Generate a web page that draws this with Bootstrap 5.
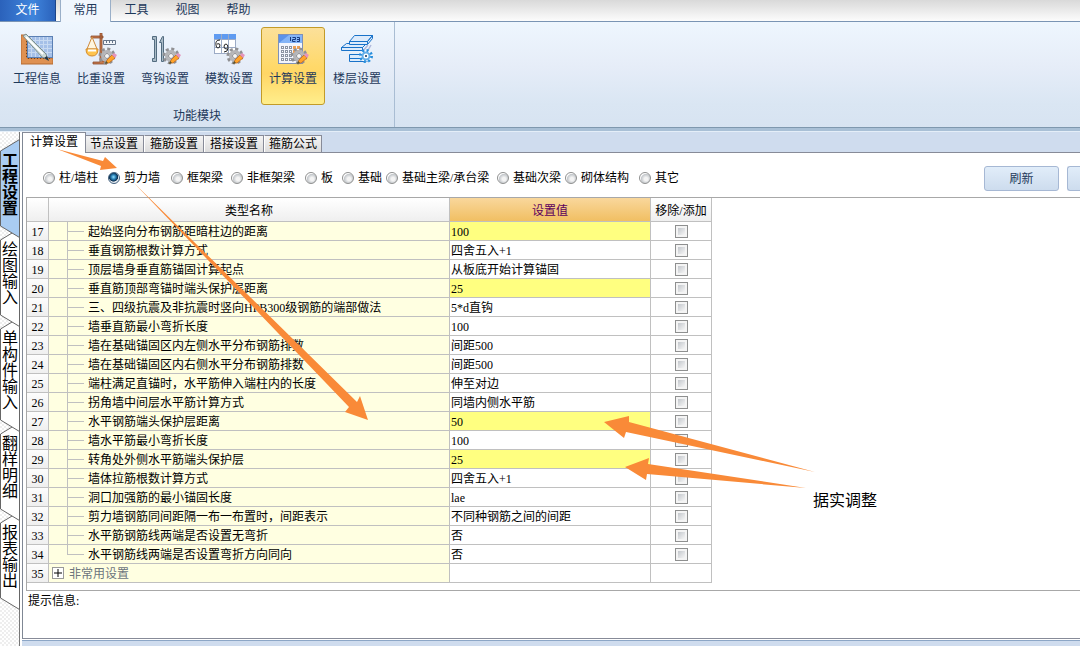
<!DOCTYPE html>
<html lang="zh-CN">
<head>
<meta charset="utf-8">
<meta name="viewport" content="width=device-width, initial-scale=1">
<title>工程设置</title>
<link href="https://cdn.jsdelivr.net/npm/bootstrap@5.3.0/dist/css/bootstrap.min.css" rel="stylesheet">
<style>
  body { font: 12px/18px "Liberation Serif", "Noto Sans CJK SC", sans-serif; color: #000; background: #fff; }
  button { font: inherit; border: 0; padding: 0; background: none; }
  .ribbon-font { font-family: "Noto Sans CJK SC", sans-serif; color: #1e395b; }
  .menu-tabs { height: 22px; background: linear-gradient(#d9d9d9, #fcfcfc); border-bottom: 1px solid #7a94b4; }
  .menu-tabs button { width: 51px; height: 20px; padding-bottom: 2px; color: #1e395b; }
  .menu-tabs .file-tab { width: 56px; height: 21px; padding-bottom: 4px; color: #fff; background: linear-gradient(90deg, #2b62bb, #3f84dc 60%, #2b62bb); border-right: 1px solid #1c4488; margin-right: 4px; }
  .menu-tabs .current { height: 22px; padding-bottom: 4px; background: #f0f6fd; border: 1px solid #9aafc8; border-width: 0 1px; }
  .ribbon { height: 110px; background: linear-gradient(#eef6fe, #e6edf8 40%, #dae6f3 75%, #d7e3f1); border-bottom: 1px solid #e4eef8; box-shadow: inset 0 -3px #a9c0d6, inset 0 -4px #7f98ae; padding-bottom: 4px; }
  .ribbon-group { border-right: 1px solid #a9bdd3; padding: 5px 5px 0; }
  .tool { display: flex; flex-direction: column; align-items: center; gap: 4px; width: 64px; height: 78px; color: #1e395b; border: 1px solid transparent; border-radius: 3px; padding-top: 5px; white-space: nowrap; }
  .tool svg { width: 32px; height: 32px; flex: none; }
  .tool.active { border-color: #c29b29; background: linear-gradient(#fbe09a, #ffd96a 50%, #ffd665 60%, #ffee8c); }
  .group-name { padding-top: 1px; text-align: center; }
  .side { width: 20px; border-right: 1px solid #777; padding-top: 7px; background: repeating-conic-gradient(#eee 0 25%, #fff 0 50%) 0 0/4px 4px; }
  .side-tab { display: grid; width: 20px; margin-bottom: -10px; position: relative; font-size: 16px; line-height: 16px; font-family: "Noto Sans CJK SC", sans-serif; }
  .side-tab svg, .side-tab span { grid-area: 1/1; width: 100%; }
  .side-tab svg { height: 100%; fill: #fff; stroke: #666; }
  .side-tab span { padding: 12px 2px 23px; z-index: 1; width: 20px; overflow-wrap: anywhere; }
  .side-tab.active { font-weight: 700; z-index: 5; }
  .side-tab.active svg { fill: #a9ccf2; }
  .side-tab:nth-child(2) { z-index: 4; } .side-tab:nth-child(3) { z-index: 3; } .side-tab:nth-child(4) { z-index: 2; }
  .page-area { border-left: 1px solid #7f8794; margin-left: 2px; }
  .sub-tabs { height: 21px; background: #cfdcee; border-bottom: 1px solid #878b98; }
  .sub-tabs button { width: 60px; height: 17px; line-height: 16px; background: linear-gradient(#f4f4f4, #dcdcdc); border: 1px solid #878b98; border-bottom: 0; border-left-color: #fff; white-space: nowrap; }
  .sub-tabs .current { width: 63px; height: 21px; background: #fff; border-left: 0; margin: 0 -2px -1px 0; padding-bottom: 2px; z-index: 1; }
  .sub-tabs button:last-child { width: 58px; }
  .filter-bar { height: 44px; padding: 6px 0 0 20px; }
  .kinds { display: grid; grid-template-columns: 65px 63px 60px 74px 37px 44px 111px 68px 74px 60px; }
  .kinds label { display: flex; align-items: center; gap: 4px; white-space: nowrap; }
  .kinds input { appearance: none; flex: none; width: 12px; height: 12px; margin: 0; border: 1px solid #8e8f8f; border-radius: 50%; background: radial-gradient(circle at 60% 60%, #f4f4f4 20%, #c4c8cc 55%, #fff 65%); }
  .kinds input:checked { border-color: #42607e; background: radial-gradient(circle at 45% 40%, #8fe0ff 0, #2478ad 30%, #0b2d4c 52%, #e4eaf0 60%); }
  .soft-btn { flex: none; width: 75px; height: 25px; border: 1px solid #a6b8d4; border-radius: 3px; background: linear-gradient(#e1edf9, #cddcee); color: #1e395b; }
  .more-btn { width: 13px; border-right: 0; border-radius: 3px 0 0 3px; }
  .grid-box { border: 1px solid #a8a8a8; border-right: 0; margin-left: 3px; padding-bottom: 7px; }
  .sheet { table-layout: fixed; width: 685px; border-collapse: separate; border-spacing: 0; }
  .sheet th, .sheet td { border: solid #c0c0c0; border-width: 0 1px 1px 0; height: 19px; line-height: 16px; padding: 2px 1px 0; white-space: nowrap; font-weight: 400; overflow: hidden; }
  .sheet thead th { height: 24px; text-align: center; background: linear-gradient(#fff, #efefef); }
  .sheet thead .picked { background: linear-gradient(#f9d79c, #f1bf62); color: #5c005c; }
  .sheet tbody th { text-align: center; background: linear-gradient(#fdfdfd, #efefef); }
  .sheet .item { background: #ffffe1; padding-top: 0; line-height: 18px; }
  .item-name { padding-top: 2px; line-height: 16px; }
  .branch { width: 17px; height: 18px; margin: 0 4px 0 17px; border-left: 1px solid #c0c0c0; flex: none; background: linear-gradient(#c0c0c0, #c0c0c0) 0 9px/16px 1px no-repeat; }
  .branch.end { border-image: linear-gradient(#c0c0c0 55%, transparent 55%) 1; }
  .sheet .changed { background: #ffff80; }
  .sheet td.pick { padding: 0; }
  .sheet input { appearance: none; display: block; width: 13px; height: 13px; margin: 0 auto; border: 1px solid #8e8f8f; background: linear-gradient(135deg, #c3c7cc, #f6f6f6) content-box, #f4f4f4; padding: 2px; }
  .toggle { width: 12px; height: 12px; border: 1px solid #999; background: #fff; flex: none; margin: 0 5px 0 2px; }
  .toggle svg { display: block; }
  .hint { padding: 1px 5px; border-bottom: 1px solid #878b98; }
  .foot { height: 7px; background: #cfdcee; box-shadow: inset 0 1px #fff, inset 0 2px #8ca6c6; margin-left: -1px; }
  .marks { position: absolute; left: 0; top: 0; pointer-events: none; fill: #f98a38; z-index: 10; }
  .remark { position: absolute; left: 813px; top: 489px; font-size: 16px; line-height: 24px; z-index: 10; }
</style>
</head>
<body class="d-flex flex-column min-vh-100 position-relative overflow-hidden">
<svg width="0" height="0" class="position-absolute" aria-hidden="true">
  <defs>
    <g id="gear">
      <circle cx="22" cy="23" r="7" fill="none" stroke="#909093" stroke-width="3" stroke-dasharray="3 2.500"/>
      <circle cx="22" cy="23" r="4.500" fill="#f1f1f1" stroke="#b4b4b7" stroke-width="3"/>
      <circle cx="22" cy="23" r="2.500" fill="#f6f6f6" stroke="#8a8a8e"/>
    </g>
    <g id="gearpen"><use href="#gear"/><path d="M21 30l1-3 5-5 3 3-6 5z" fill="#ffa42a" stroke="#c4681a" stroke-width=".800"/><path d="M27 22l2-2 3 2-2 3z" fill="#e594bc"/><path d="M20 31l1-3 2 2z" fill="#553"/></g>
  </defs>
</svg>
<header class="ribbon-font">
  <nav class="menu-tabs d-flex" aria-label="菜单">
    <button class="file-tab">文件</button><button class="current">常用</button><button>工具</button><button>视图</button><button>帮助</button>
  </nav>
  <div class="ribbon d-flex">
    <section class="ribbon-group">
      <div class="d-flex">
        <button class="tool"><svg viewBox="0 0 32 32"><path d="M0 2v29h32v-6H6V2z" fill="#df9152" stroke="#b56b30"/><rect x="6.500" y="3.500" width="25" height="21" fill="#a5c0e8" stroke="#5b80b4"/><path d="M10.500 4v20M14.500 4v20M18.500 4v20M22.500 4v20M26.500 4v20M7 7.500h24M7 11.500h24M7 15.500h24M7 19.500h24" stroke="#c8daf2"/><path d="M7 25.500h24M5.500 5v20" stroke="#704019" stroke-dasharray="1 2"/><path d="M2 3l3-2 20 20 2 6-6-3z" fill="#cddbd9" stroke="#7d8e8d"/><path d="M5 4l17 17" stroke="#fff" stroke-width="2"/><path d="M23 25l5 3-2-5z" fill="#26343f"/></svg>工程信息</button>
        <button class="tool"><svg viewBox="0 0 32 32"><path d="M15 0h2v28h5v3H8v-2h7zM6 3h12v2H6z" fill="#c5794d" stroke="#8e4d2c" stroke-width=".800"/><path d="M7 4L2 16h10z" fill="#fff6df" stroke="#cd8a3d"/><path d="M1 16h12q0 7-6 7t-6-7z" fill="#ffc44e" stroke="#d58c2b"/><path d="M3 17.500h8" stroke="#fff" stroke-width="2"/><path d="M18.500 7.500h12v4h-12zM21.500 8v2M24.500 8v2M27.500 8v2" fill="#f3f6fa" stroke="#66768b"/><use href="#gearpen"/></svg>比重设置</button>
        <button class="tool"><svg viewBox="0 0 32 32"><path d="M3.500 3.500h4v25h-4v-3h2v-19h-2zM10.500 9.500l3-6h1v25h-2v-19z" fill="#a9bac6" stroke="#536c80"/><use href="#gearpen"/></svg>弯钩设置</button>
        <button class="tool"><svg viewBox="0 0 32 32"><rect x="1.500" y="1.500" width="21" height="19" fill="#fff" stroke="#9cabc6"/><path d="M1 1h22v5H1z" fill="#5f9bf1"/><path d="M8.500 1v19M15.500 1v19M1 6.500h21M1 14.500h21" stroke="#9cabc6" fill="none"/><path d="M7 7q-5 0-4 5 0 3 2 3t2-3q0-2-3-1M11 19q4 0 4-4 0-4-2-4t-2 3q0 2 3 2" fill="none" stroke="#222"/><use href="#gearpen"/></svg>模数设置</button>
        <button class="tool active"><svg viewBox="0 0 32 32"><rect x="1.500" y="1.500" width="24" height="29" fill="#f2f5fd" stroke="#7f91b9"/><path d="M2 2h23v8H2z" fill="#5b92ea"/><path d="M2 10L12 2h13v8z" fill="#84b4f7"/><path d="M13.500 4v4M15.500 4.500h3v2h-3v2h3M20 4.500h2.500v4H20M20 6.500h3" fill="none" stroke="#173b81"/><path d="M4 14.500h20M4 18.500h20M4 22.500h20M4 26.500h20" stroke="#8b93a3" stroke-width="3" stroke-dasharray="3 1"/><path d="M4 14.500h20M4 18.500h20M4 22.500h20M4 26.500h20" stroke="#fff" stroke-dasharray="1 3" stroke-dashoffset="-1"/><path d="M16 14.500h8M16 18.500h8" stroke="#eea056" stroke-width="3" stroke-dasharray="3 1"/><use href="#gearpen"/></svg>计算设置</button>
        <button class="tool"><svg viewBox="0 0 32 32" fill="#ddebfb" stroke="#1972c9"><path d="M8.500 21.500h18v7h-18zM9 25.500h16"/><path d="M.500 14.500l5-4h20l-4 4zM.500 14.500h21v3H.500z"/><path d="M8.500 8.500l5-6h18l-5 6zM8.500 8.500h18v3h-18zM26.500 8.500l5-6v3l-5 6"/><path d="M30 12l-4 7M27 12l-5 6" stroke="#b0b9dc" stroke-width="1.500"/><circle cx="25" cy="23" r="5.500" stroke="#278edd" stroke-width="3" stroke-dasharray="2 2.300" fill="#fff"/><circle cx="25" cy="23" r="3.500" stroke="#65afe8" stroke-width="2" fill="#fff"/><circle cx="25" cy="23" r="1" fill="#08335e" stroke="none"/></svg>楼层设置</button>
      </div>
      <div class="group-name">功能模块</div>
    </section>
  </div>
</header>
<div class="d-flex flex-grow-1">
  <nav class="side flex-shrink-0" aria-label="模块">
    <button class="side-tab active"><svg viewBox="0 0 20 99" preserveAspectRatio="none"><path d="M.500 12L19.500 .500V98.500L.500 87z"/></svg><span>工程设置</span></button>
    <button class="side-tab"><svg viewBox="0 0 20 99" preserveAspectRatio="none"><path d="M.500 12L19.500 .500V98.500L.500 87z"/></svg><span>绘图输入</span></button>
    <button class="side-tab"><svg viewBox="0 0 20 115" preserveAspectRatio="none"><path d="M.500 12L19.500 .500V114.500L.500 103z"/></svg><span>单构件输入</span></button>
    <button class="side-tab"><svg viewBox="0 0 20 99" preserveAspectRatio="none"><path d="M.500 12L19.500 .500V98.500L.500 87z"/></svg><span>翻样明细</span></button>
    <button class="side-tab"><svg viewBox="0 0 20 99" preserveAspectRatio="none"><path d="M.500 12L19.500 .500V98.500L.500 87z"/></svg><span>报表输出</span></button>
  </nav>
  <main class="page-area d-flex flex-column flex-grow-1">
    <div class="sub-tabs d-flex align-items-end">
      <button class="current">计算设置</button><button>节点设置</button><button>箍筋设置</button><button>搭接设置</button><button>箍筋公式</button>
    </div>
    <div class="filter-bar d-flex align-items-center justify-content-between">
      <div class="kinds">
        <label><input type="radio" name="kind">柱/墙柱</label>
        <label><input type="radio" name="kind" checked>剪力墙</label>
        <label><input type="radio" name="kind">框架梁</label>
        <label><input type="radio" name="kind">非框架梁</label>
        <label><input type="radio" name="kind">板</label>
        <label><input type="radio" name="kind">基础</label>
        <label><input type="radio" name="kind">基础主梁/承台梁</label>
        <label><input type="radio" name="kind">基础次梁</label>
        <label><input type="radio" name="kind">砌体结构</label>
        <label><input type="radio" name="kind">其它</label>
      </div>
      <div class="d-flex gap-2 ribbon-font">
        <button class="soft-btn">刷新</button>
        <button class="soft-btn more-btn" aria-label="更多"></button>
      </div>
    </div>
    <div class="grid-box">
      <table class="sheet">
        <colgroup><col style="width:22px"><col style="width:401px"><col style="width:201px"><col style="width:61px"></colgroup>
        <thead><tr><th></th><th>类型名称</th><th class="picked">设置值</th><th>移除/添加</th></tr></thead>
        <tbody id="rows"></tbody>
      </table>
    </div>
    <div class="hint flex-grow-1">提示信息:</div>
    <div class="foot"></div>
  </main>
</div>
<svg class="marks" width="1080" height="646" viewBox="0 0 1080 646" aria-hidden="true">
  <path d="M57 149L103 161 105 157 117 168 100 170 101 166z"/>
  <path d="M134 183L357 402 360 396 368 420 345 412 349 407z"/>
  <path d="M815 472L629 422 629 416 604 422 624 438 626 432z"/>
  <path d="M806 488L648 464 649 458 625 467 646 480 647 474z"/>
</svg>
<div class="remark">据实调整</div>
<script src="https://cdn.jsdelivr.net/npm/bootstrap@5.3.0/dist/js/bootstrap.bundle.min.js"></script>
<script>
  const items = [
    ['起始竖向分布钢筋距暗柱边的距离', '100', 1], ['垂直钢筋根数计算方式', '四舍五入+1'],
    ['顶层墙身垂直筋锚固计算起点', '从板底开始计算锚固'], ['垂直筋顶部弯锚时端头保护层距离', '25', 1],
    ['三、四级抗震及非抗震时竖向HPB300级钢筋的端部做法', '5*d直钩'], ['墙垂直筋最小弯折长度', '100'],
    ['墙在基础锚固区内左侧水平分布钢筋排数', '间距500'], ['墙在基础锚固区内右侧水平分布钢筋排数', '间距500'],
    ['端柱满足直锚时，水平筋伸入端柱内的长度', '伸至对边'], ['拐角墙中间层水平筋计算方式', '同墙内侧水平筋'],
    ['水平钢筋端头保护层距离', '50', 1], ['墙水平筋最小弯折长度', '100'],
    ['转角处外侧水平筋端头保护层', '25', 1], ['墙体拉筋根数计算方式', '四舍五入+1'],
    ['洞口加强筋的最小锚固长度', 'lae'], ['剪力墙钢筋同间距隔一布一布置时，间距表示', '不同种钢筋之间的间距'],
    ['水平筋钢筋线两端是否设置无弯折', '否'], ['水平钢筋线两端是否设置弯折方向同向', '否']
  ];
  const plus = '<span class="toggle"><svg width="10" height="10"><path d="M1 5h8M5 1v8" stroke="#000"/></svg></span>';
  document.getElementById('rows').innerHTML = items.map(([name, value, changed], i) =>
    `<tr><th scope="row">${i + 17}</th><td class="item"><div class="d-flex"><span class="branch${i === items.length - 1 ? ' end' : ''}"></span><span class="item-name">${name}</span></div></td>` +
    `<td class="${changed ? 'changed' : ''}">${value}</td><td class="pick"><input type="checkbox" aria-label="移除/添加 ${name}"></td></tr>`
  ).join('') + `<tr><th scope="row">35</th><td class="item text-secondary"><div class="d-flex align-items-center">${plus}<span class="item-name">非常用设置</span></div></td><td></td><td></td></tr>`;
</script>
</body>
</html>
